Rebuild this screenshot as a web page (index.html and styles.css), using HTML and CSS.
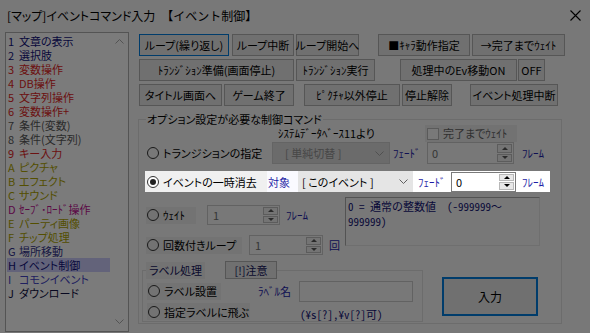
FILE: index.html
```html
<!DOCTYPE html>
<html lang="ja">

<head>
  <meta charset="UTF-8">
  <meta name="viewport" content="width=device-width, initial-scale=1.0">
  <title>[マップ]イベントコマンド入力</title>
  <link rel="stylesheet" href="styles.css">
</head>

<body>
  <div class="window">
    <div class="titlebar">
      <span class="title">[マップ]イベントコマンド入力</span>
      <span class="title sub">【イベント制御】</span>
      <svg class="close" width="11" height="11" viewBox="0 0 11 11">
        <path d="M0.5 0.5L10.5 10.5M10.5 0.5L0.5 10.5" stroke="#000" stroke-width="1.1" fill="none" />
      </svg>
    </div>

    <div class="client">
      <!-- command category list -->
      <div class="cmdlist">
        <ul class="items">
          <li class="c-navy"><span class="num">1</span>文章の表示</li>
          <li class="c-navy"><span class="num">2</span>選択肢</li>
          <li class="c-red"><span class="num">3</span>変数操作</li>
          <li class="c-red"><span class="num">4</span>DB操作</li>
          <li class="c-red"><span class="num">5</span>文字列操作</li>
          <li class="c-red"><span class="num">6</span>変数操作+</li>
          <li class="c-gray"><span class="num">7</span>条件(変数)</li>
          <li class="c-gray"><span class="num">8</span>条件(文字列)</li>
          <li class="c-red"><span class="num">9</span>キー入力</li>
          <li class="c-olive"><span class="num">A</span>ピクチャ</li>
          <li class="c-olive"><span class="num">B</span>エフェクト</li>
          <li class="c-olive"><span class="num">C</span>サウンド</li>
          <li class="c-magenta"><span class="num">D</span>ｾｰﾌﾞ･ﾛｰﾄﾞ操作</li>
          <li class="c-olive"><span class="num">E</span>パーティ画像</li>
          <li class="c-olive"><span class="num">F</span>チップ処理</li>
          <li class="c-blue"><span class="num">G</span>場所移動</li>
          <li class="c-navy selected"><span class="num">H</span>イベント制御</li>
          <li class="c-light"><span class="num">I</span>コモンイベント</li>
          <li class="c-dark"><span class="num">J</span>ダウンロード</li>
        </ul>
        <div class="scrollbar">
          <svg width="9" height="5" viewBox="0 0 9 5"><polyline points="0.5,4.5 4.5,0.5 8.5,4.5" stroke="#a6a6a6" fill="none" /></svg>
          <svg width="9" height="5" viewBox="0 0 9 5"><polyline points="0.5,0.5 4.5,4.5 8.5,0.5" stroke="#a6a6a6" fill="none" /></svg>
        </div>
      </div>

      <div class="main">
        <div class="btnrow">
          <div class="btn focus w90">ループ(繰り返し)</div>
          <div class="btn w62 ml3">ループ中断</div>
          <div class="btn w63 ml2">ループ開始へ</div>
          <div class="btn w92 ml19">■ｷｬﾗ動作指定</div>
          <div class="btn w93 ml2">→完了までｳｪｲﾄ</div>
        </div>
        <div class="btnrow">
          <div class="btn w155">ﾄﾗﾝｼﾞｼｮﾝ準備(画面停止)</div>
          <div class="btn w79 ml2">ﾄﾗﾝｼﾞｼｮﾝ実行</div>
          <div class="btn w117 ml25">処理中のEv移動ON</div>
          <div class="btn w27 ml1">OFF</div>
        </div>
        <div class="btnrow">
          <div class="btn w83">タイトル画面へ</div>
          <div class="btn w70 ml2">ゲーム終了</div>
          <div class="btn w96 ml10">ﾋﾟｸﾁｬ以外停止</div>
          <div class="btn w50 ml2">停止解除</div>
          <div class="btn w88 ml18">イベント処理中断</div>
        </div>

        <fieldset class="options">
          <legend>オプション設定が必要な制御コマンド</legend>

          <div class="meta">
            <span class="sysdb">ｼｽﾃﾑﾃﾞｰﾀﾍﾞｰｽ11より</span>
            <span class="check-wrap"><span class="checkbox"></span>完了までｳｪｲﾄ</span>
          </div>

          <div class="trans">
            <span class="radio-label trans-label"><span class="radio"></span>トランジションの指定</span>
            <div class="select disabled">[ 単純切替 ]
              <svg width="9" height="5" viewBox="0 0 9 5"><polyline points="0.5,0.5 4.5,4.5 8.5,0.5" stroke="#a0a0a0" fill="none" /></svg>
            </div>
            <span class="lbl fade-lbl">ﾌｪｰﾄﾞ</span>
            <div class="spin disabled trans-spin">
              <span class="val">0</span>
              <div class="spin-btns"><span class="up"></span><span class="down"></span></div>
            </div>
            <span class="lbl frame-lbl">ﾌﾚｰﾑ</span>
          </div>

          <!-- highlighted row -->
          <div class="spot">
            <span class="radio-label spot-label"><span class="radio on"></span>イベントの一時消去</span>
            <span class="lbl target">対象</span>
            <div class="select spot-select">[ このイベント ]
              <svg width="9" height="5" viewBox="0 0 9 5"><polyline points="0.5,0.5 4.5,4.5 8.5,0.5" stroke="#606060" fill="none" /></svg>
            </div>
            <span class="lbl spot-fade">ﾌｪｰﾄﾞ</span>
            <div class="spin spot-spin">
              <span class="val">0</span>
              <div class="spin-btns"><span class="up"></span><span class="down"></span></div>
            </div>
            <span class="lbl spot-frame">ﾌﾚｰﾑ</span>
          </div>

          <div class="lower">
            <div class="left-col">
              <div class="opt-row wait-row">
                <span class="radio-label wait-label"><span class="radio"></span>ｳｪｲﾄ</span>
                <div class="spin disabled wait-spin">
                  <span class="val">1</span>
                  <div class="spin-btns"><span class="up"></span><span class="down"></span></div>
                </div>
                <span class="lbl unit">ﾌﾚｰﾑ</span>
              </div>
              <div class="opt-row loop-row">
                <span class="radio-label loop-label"><span class="radio"></span>回数付きループ</span>
                <div class="spin disabled loop-spin">
                  <span class="val">1</span>
                  <div class="spin-btns"><span class="up"></span><span class="down"></span></div>
                </div>
                <span class="lbl unit">回</span>
              </div>
            </div>
            <div class="memo">0 = 通常の整数値&nbsp;&nbsp;(-999999～<br>999999)</div>
          </div>

          <div class="lower2">
            <fieldset class="label-group">
              <legend><span class="legend-text">ラベル処理</span><span class="btn note">[!]注意</span></legend>
              <div class="lg-row">
                <span class="radio-label set-label"><span class="radio"></span>ラベル設置</span>
                <span class="lbl name-lbl">ﾗﾍﾞﾙ名</span>
                <div class="textbox disabled"></div>
              </div>
              <div class="lg-row jump-row">
                <span class="radio-label jump-label"><span class="radio"></span>指定ラベルに飛ぶ</span>
                <span class="hint">(¥s[?],¥v[?]可)</span>
              </div>
            </fieldset>
            <div class="btn enter">入力</div>
          </div>
        </fieldset>
      </div>
    </div>

    <div class="dim"></div>
  </div>
</body>

</html>
```

FILE: styles.css
```css
:root {
  --face: #f0f0f0;
  --btn: #e1e1e1;
  --btn-border: #adadad;
  --focus: #0078d7;
  --label-blue: #1e1ea6;
}

body {
  margin: 0;
  font-family: "Noto Sans CJK JP", "Noto Sans", sans-serif;
  font-size: 11px;
  font-feature-settings: "palt";
  color: #000;
}

.window {
  position: relative;
  width: 590px;
  height: 333px;
  background: var(--face);
  overflow: hidden;
}

/* title bar */
.titlebar {
  display: flex;
  align-items: center;
  height: 30px;
  padding-left: 7px;
}

.title {
  font-size: 12px;
}

.title.sub {
  margin-left: 6px;
  font-feature-settings: normal;
}

.close {
  margin-left: auto;
  margin-right: 9px;
}

.client {
  display: flex;
  padding-top: 2px;
}

/* command list */
.cmdlist {
  display: flex;
  margin-left: 5px;
  width: 124px;
  height: 300px;
  box-sizing: border-box;
  border: 1px solid #a8a8a8;
  background: #f6f6f6;
}

.items {
  flex: 1;
  list-style: none;
  margin: 0;
  padding: 1px 0 0 1px;
}

.items li {
  height: 14px;
  line-height: 14px;
  width: 102px;
  padding-left: 1px;
  white-space: nowrap;
}

.items .num {
  display: inline-block;
  width: 7px;
  margin-right: 4px;
}

.items li.selected {
  background: #c6c6f4;
}

.c-navy { color: #101078; }
.c-red { color: #d82424; }
.c-gray { color: #555; }
.c-olive { color: #a89e00; }
.c-magenta { color: #b8108e; }
.c-blue { color: #303088; }
.c-light { color: #4040c0; }
.c-dark { color: #101040; }

.scrollbar {
  width: 17px;
  display: flex;
  flex-direction: column;
  align-items: center;
  justify-content: space-between;
  padding: 6px 0 7px;
}

/* command buttons */
.main {
  margin-left: 10px;
  padding-top: 2px;
  width: 430px;
}

.btnrow {
  display: flex;
  height: 22px;
  margin-bottom: 3px;
}

.btn {
  box-sizing: border-box;
  height: 22px;
  display: flex;
  align-items: center;
  justify-content: center;
  background: var(--btn);
  border: 1px solid var(--btn-border);
  white-space: nowrap;
}

.btn.focus {
  border-color: var(--focus);
}

.w27 { width: 27px; }
.w50 { width: 50px; }
.w62 { width: 62px; }
.w63 { width: 63px; }
.w70 { width: 70px; }
.w79 { width: 79px; }
.w83 { width: 83px; }
.w88 { width: 88px; }
.w90 { width: 90px; }
.w92 { width: 92px; }
.w93 { width: 93px; }
.w96 { width: 96px; }
.w117 { width: 117px; }
.w155 { width: 155px; }
.ml1 { margin-left: 1px; }
.ml2 { margin-left: 2px; }
.ml3 { margin-left: 3px; }
.ml10 { margin-left: 10px; }
.ml18 { margin-left: 18px; }
.ml19 { margin-left: 19px; }
.ml25 { margin-left: 25px; }

/* options group */
.options {
  margin: 5px 0 0 -1px;
  padding: 0;
  width: 424px;
  height: 213px;
  box-sizing: border-box;
  border: 1px solid #d8d8d8;
  min-width: 0;
}

.options > legend {
  margin-left: 7px;
  padding: 0 1px;
  line-height: 16px;
}

.meta {
  display: flex;
  height: 17px;
  margin-top: -2px;
  line-height: 17px;
}

.sysdb {
  margin-left: 139px;
  width: 147px;
}

.check-wrap {
  display: flex;
  align-items: center;
  width: 92px;
  background: #e4e4e4;
  color: #606060;
}

.checkbox {
  width: 12px;
  height: 12px;
  box-sizing: border-box;
  border: 1px solid #b4b4b4;
  background: #f2f2f2;
  margin: 0 4px 0 2px;
}

.radio-label {
  display: flex;
  align-items: center;
  box-sizing: border-box;
  white-space: nowrap;
}

.radio {
  width: 12px;
  height: 12px;
  box-sizing: border-box;
  border: 1px solid #333;
  border-radius: 50%;
  margin-right: 4px;
  display: inline-flex;
  align-items: center;
  justify-content: center;
}

.radio.on {
  background: #fff;
}

.radio.on::after {
  content: "";
  width: 6px;
  height: 6px;
  border-radius: 50%;
  background: #222;
}

.lbl {
  color: var(--label-blue);
  white-space: nowrap;
}

.select {
  box-sizing: border-box;
  display: flex;
  align-items: center;
  justify-content: space-between;
  white-space: nowrap;
}

.select svg {
  margin-right: 5px;
}

.select.disabled {
  background: #d6d6d6;
  border: 1px solid #c8c8c8;
  color: #8e8e8e;
}

.spin {
  box-sizing: border-box;
  display: flex;
  align-items: stretch;
  border: 1px solid #7a7a7a;
  background: #fff;
}

.spin.disabled {
  border-color: #c4c4c4;
  background: var(--face);
  color: #6d6d6d;
}

.spin .val {
  flex: 1;
  display: flex;
  align-items: center;
  padding-left: 4px;
}

.spin-btns {
  width: 15px;
  display: flex;
  flex-direction: column;
  padding: 1px 1px 1px 0;
  gap: 1px;
}

.spin-btns span {
  flex: 1;
  display: flex;
  align-items: center;
  justify-content: center;
  background: #e8e8e8;
  border: 1px solid #b8b8b8;
}

.spin-btns .up::after {
  content: "";
  border-left: 3px solid transparent;
  border-right: 3px solid transparent;
  border-bottom: 3px solid #000;
}

.spin-btns .down::after {
  content: "";
  border-left: 3px solid transparent;
  border-right: 3px solid transparent;
  border-top: 3px solid #000;
}

.spin.disabled .spin-btns span::after {
  border-top-color: #555;
  border-bottom-color: #555;
}

.spin.disabled .spin-btns .up::after { border-top-color: transparent; }
.spin.disabled .spin-btns .down::after { border-bottom-color: transparent; }

/* transition row */
.trans {
  display: flex;
  align-items: center;
  height: 22px;
}

.trans-label {
  margin-left: 8px;
  width: 125px;
}

.trans .select {
  width: 118px;
  height: 22px;
  padding-left: 12px;
}

.fade-lbl {
  width: 37px;
  padding-left: 3px;
  box-sizing: border-box;
}

.trans-spin {
  width: 87px;
  height: 22px;
}

.frame-lbl {
  margin-left: 8px;
}

/* highlighted row */
.spot {
  position: relative;
  z-index: 2;
  display: flex;
  align-items: center;
  margin: 7px 0 0 6px;
  width: 405px;
  height: 21px;
  background: #fff;
}

.spot > * {
  height: 21px;
  display: flex;
  align-items: center;
  box-sizing: border-box;
}

.spot-label {
  width: 122px;
  padding-left: 2px;
  background: var(--face);
}

.target {
  width: 31px;
  padding-left: 1px;
  background: #fafaff;
}

.spot-select {
  width: 115px;
  padding-left: 4px;
  background: #e5e5e5;
  justify-content: space-between;
}

.spot-fade {
  width: 38px;
  padding-left: 5px;
}

.spot-spin {
  width: 65px;
  height: 20px;
  align-items: stretch;
}

.spot-frame {
  padding-left: 6px;
}

/* wait / loop rows */
.lower {
  display: flex;
  margin-top: 5px;
}

.left-col {
  margin-left: 7px;
  width: 199px;
}

.opt-row {
  display: flex;
  align-items: center;
  height: 20px;
}

.wait-row {
  margin-top: 8px;
}

.loop-row {
  margin-top: 10px;
}

.wait-label,
.loop-label,
.set-label,
.jump-label {
  height: 17px;
  padding-left: 1px;
  background: #e6e6e6;
}

.wait-label { width: 50px; }
.loop-label { width: 96px; }

.wait-spin {
  margin-left: 11px;
  width: 73px;
  height: 20px;
}

.loop-spin {
  margin-left: 7px;
  width: 74px;
  height: 20px;
}

.wait-spin .val,
.loop-spin .val {
  padding-left: 5px;
}

.unit {
  margin-left: 6px;
}

.memo {
  width: 195px;
  height: 49px;
  box-sizing: border-box;
  border-top: 1px solid #a6a6a6;
  border-left: 1px solid #a6a6a6;
  border-right: 1px solid #dedede;
  border-bottom: 1px solid #dedede;
  padding: 1px 0 0 2px;
  font-family: "Noto Sans Mono CJK JP", "Liberation Mono", monospace;
  font-size: 11px;
  line-height: 15px;
  font-feature-settings: normal;
  color: #101070;
}

/* label group */
.lower2 {
  display: flex;
  margin-top: 6px;
}

.label-group {
  margin: 0 0 0 3px;
  padding: 0;
  width: 281px;
  height: 61px;
  box-sizing: border-box;
  border: 1px solid #d8d8d8;
  min-width: 0;
}

.label-group > legend {
  display: flex;
  align-items: center;
  height: 18px;
  margin-left: 3px;
  padding: 0;
}

.legend-text {
  padding: 0 3px;
  background: #e6e6e6;
  color: #14145a;
  line-height: 17px;
}

.btn.note {
  margin-left: 20px;
  width: 52px;
  height: 18px;
  color: #14145a;
}

.lg-row {
  display: flex;
  align-items: center;
}

.lg-row:first-of-type {
  margin-top: 2px;
  height: 20px;
}

.set-label {
  margin-left: 4px;
  width: 74px;
}

.jump-label {
  margin-left: 4px;
  width: 103px;
}

.name-lbl {
  margin-left: 37px;
}

.textbox {
  margin-left: 8px;
  width: 114px;
  height: 21px;
  box-sizing: border-box;
  border: 1px solid #c4c4c4;
}

.hint {
  margin: 5px 0 0 50px;
  font-family: "Noto Sans Mono CJK JP", "Liberation Mono", monospace;
  font-feature-settings: normal;
  color: #101070;
}

.btn.enter {
  margin: 16px 0 0 19px;
  width: 96px;
  height: 39px;
  border: 2px solid var(--focus);
  font-size: 12px;
}

/* dimming layer over the whole dialog */
.dim {
  position: absolute;
  inset: 0;
  z-index: 1;
  background: rgba(0, 0, 0, 0.5);
}
```
